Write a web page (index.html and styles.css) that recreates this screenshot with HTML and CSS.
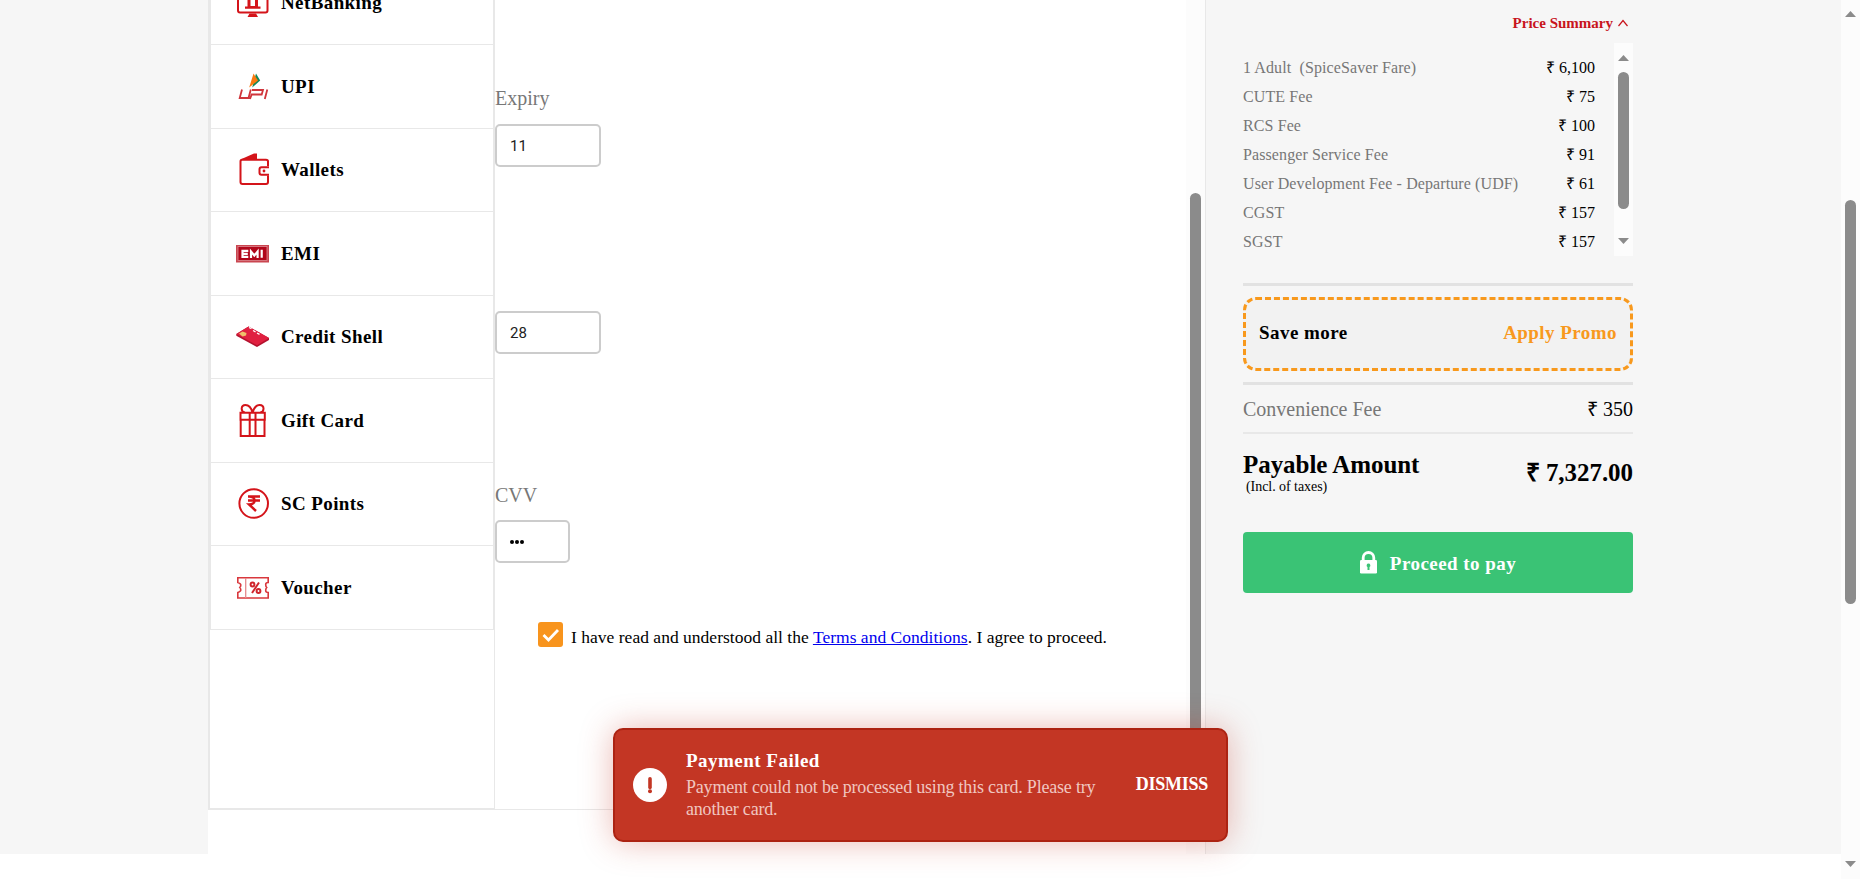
FILE: index.html
```html
<!DOCTYPE html>
<html lang="en">
<head>
<meta charset="utf-8">
<title>Payment</title>
<link rel="stylesheet" href="styles.css">
</head>
<body>
<div class="window">
  <div class="page">
    <main class="payment">
      <nav class="methods">
        <ul class="method-list">
          <li class="method">
            <svg class="icon" viewBox="0 0 33 33"><rect x="2" y="1" width="29.500" height="25.500" rx="2" fill="#fff" stroke="#d4141a" stroke-width="2"/><path d="M16.500 4l8 5h-16zM9 20.500h15.500v2.200H9zM11.500 11h3v9h4.500v-9h3v11H11.500zM13.500 27.500h6.500l2 3.500H11.500z" fill="#d4141a"/></svg>
            <span>NetBanking</span>
          </li>
          <li class="method">
            <svg class="icon" viewBox="0 0 33 33"><path d="M20 3.500l4.200 7-8 7z" fill="#12885a"/><path d="M17.500 3.500l4.500 7-8.800 7z" fill="#f97a10"/><path d="M6 19.500l-2.300 8.500h8.800L14.800 19.500M14 29l1.700-4.500h10l1.300-4.500H16M31.300 19.500l-2.500 9.500" fill="none" stroke="#d0353b" stroke-width="1.800"/></svg>
            <span>UPI</span>
          </li>
          <li class="method">
            <svg class="icon" viewBox="0 0 33 33"><path d="M5.500 6L18 .500h3V6z" fill="#d4141a"/><path d="M32 13V8.500Q32 6.700 30 6.700H6Q4.500 6.700 4.500 8.500V29q0 2 2 2H30q2 0 2-2V22.500" fill="none" stroke="#d4141a" stroke-width="2"/><path d="M33 14.200H25.500q-2 0-2 2v3.600q0 2 2 2H33" fill="none" stroke="#d4141a" stroke-width="2"/><circle cx="28" cy="18" r="1.400" fill="#d4141a"/></svg>
            <span>Wallets</span>
          </li>
          <li class="method">
            <svg class="icon" viewBox="0 0 33 33"><rect x="0" y="8" width="33" height="17.500" fill="#ca4650"/><rect x="2" y="9.500" width="29" height="14" fill="#b1061a" stroke="#dc8b92" stroke-width=".8"/><path d="M12.300 13.800H6.500v6H12.300M6.500 16.800h5.300M15 21v-6.500l3.300 4 3.300-4V21M25.700 12.800v8" fill="none" stroke="#fff" stroke-width="2.200"/></svg>
            <span>EMI</span>
          </li>
          <li class="method">
            <svg class="icon" viewBox="0 0 33 33"><path d="M.3 14L12.500 6.500 33 18v2L21 27 .3 15.800z" fill="#b3122e"/><path d="M.3 14L12.500 6.500 33 18l-12 7.200z" fill="#e02040"/><path d="M3 13.500l3.500-2 4 1.500-.5 2.500-3.500 1z" fill="#efc06b"/><path d="M13 7.500l2.500 1.200M17 10.500l2.500 1.300M21 13l2.500 1.300" stroke="#fff" stroke-width="1.300"/></svg>
            <span>Credit Shell</span>
          </li>
          <li class="method">
            <svg class="icon" viewBox="0 0 33 33"><path d="M4.500 8.800h24.300v7H4.500zM4.700 15.800h23.800v16.300H4.700zM13.700 8.800v23M19.500 8.800v23M16.500 8.500C15 3 13 1 9.500 1 4.500 1 4.500 8 9 8.500M16.700 8.500C18.200 3 20.200 1 23.700 1c5 0 5 7 .5 7.500" fill="none" stroke="#d4141a" stroke-width="2"/></svg>
            <span>Gift Card</span>
          </li>
          <li class="method">
            <svg class="icon" viewBox="0 0 33 33"><circle cx="17.700" cy="16.500" r="14.300" fill="none" stroke="#d4141a" stroke-width="2"/><path d="M12 9.500h12M12 13.500h12M13 9.500c7.500 0 7.500 8 0 8l7 6.500" fill="none" stroke="#d4141a" stroke-width="2.400"/></svg>
            <span>SC Points</span>
          </li>
          <li class="method">
            <svg class="icon" viewBox="0 0 33 33"><path d="M1.800 6.700H32.200V11.500q-2.500 0-2.500 2t1 3q-1 1-1 3t2.500 2v5.500H1.800V21.500q3-1 3-2.500t-1-2.500q1-1 1-2.500t-3-2.500z" fill="#fff" stroke="#d9383d" stroke-width="1.600"/><path d="M9.700 7v20" stroke="#e58a8d" stroke-width="1.300"/><g fill="none" stroke="#d0252c" stroke-width="2"><circle cx="16.500" cy="13.500" r="1.900"/><circle cx="22.500" cy="20" r="1.900"/><path d="M23 11.500l-7 10.500"/></g></svg>
            <span>Voucher</span>
          </li>
        </ul>
      </nav>
      <section class="form">
        <label class="label">Expiry</label>
        <div class="field month">11</div>
        <div class="field year">28</div>
        <label class="label cvv-label">CVV</label>
        <div class="field cvv"><i></i><i></i><i></i></div>
        <div class="terms">
          <span class="check"><svg viewBox="0 0 25 25"><path d="M5.500 13l5 5L20 8" fill="none" stroke="#fff" stroke-width="2.800"/></svg></span>
          <p class="terms-text">I have read and understood all the <a href="#">Terms and Conditions</a>. I agree to proceed.</p>
        </div>
      </section>
      <div class="form-track"><div class="form-thumb"></div></div>
    </main>
    <aside class="summary">
      <div class="summary-head">Price Summary <svg width="10" height="8" viewBox="0 0 10 8"><path d="M.5 7L5 1.500 9.500 7" fill="none" stroke="#c8141c" stroke-width="1.200"/></svg></div>
      <div class="fare-box">
        <ul class="fares">
          <li><span>1 Adult&nbsp; (SpiceSaver Fare)</span><b>₹ 6,100</b></li>
          <li><span>CUTE Fee</span><b>₹ 75</b></li>
          <li><span>RCS Fee</span><b>₹ 100</b></li>
          <li><span>Passenger Service Fee</span><b>₹ 91</b></li>
          <li><span>User Development Fee - Departure (UDF)</span><b>₹ 61</b></li>
          <li><span>CGST</span><b>₹ 157</b></li>
          <li><span>SGST</span><b>₹ 157</b></li>
        </ul>
        <div class="fare-track">
          <svg class="up" width="11" height="6" viewBox="0 0 11 6"><path d="M5.500 0L11 6H0z"/></svg>
          <div class="fare-thumb"></div>
          <svg class="down" width="11" height="6" viewBox="0 0 11 6"><path d="M0 0h11L5.500 6z"/></svg>
        </div>
      </div>
      <div class="promo-wrap">
        <div class="promo"><span>Save more</span><span class="apply">Apply Promo</span></div>
      </div>
      <div class="convenience"><span>Convenience Fee</span><b>₹ 350</b></div>
      <div class="payable">
        <div><div class="payable-title">Payable Amount</div><div class="payable-note">(Incl. of taxes)</div></div>
        <div class="payable-amount">₹ 7,327.00</div>
      </div>
      <div class="pay-button">
        <svg width="17" height="23" viewBox="0 0 17 23"><path d="M3.200 10V6.800a5.300 5.300 0 0 1 10.600 0V10" fill="none" stroke="#fff" stroke-width="2.800"/><rect y="9" width="17" height="13.500" rx="1.200" fill="#fff"/><path d="M8.500 12.500a1.900 1.900 0 0 1 1 3.500v3h-2v-3a1.900 1.900 0 0 1 1-3.500z" fill="#3ac375"/></svg>
        <span>Proceed to pay</span>
      </div>
    </aside>
  </div>
  <div class="page-track">
    <svg width="11" height="6" viewBox="0 0 11 6"><path d="M5.500 0L11 6H0z"/></svg>
    <div class="page-thumb"></div>
    <svg class="page-down" width="11" height="6" viewBox="0 0 11 6"><path d="M0 0h11L5.500 6z"/></svg>
  </div>
  <div class="toast">
    <svg class="toast-icon" width="34" height="34" viewBox="0 0 34 34"><circle cx="17" cy="17" r="17" fill="#fff"/><path d="M17 10.700v8.800" stroke="#c33624" stroke-width="3.600" stroke-linecap="round"/><circle cx="17" cy="23.300" r="2" fill="#c33624"/></svg>
    <div class="toast-body">
      <div class="toast-title">Payment Failed</div>
      <div class="toast-text">Payment could not be processed using this card. Please try another card.</div>
    </div>
    <div class="dismiss">DISMISS</div>
  </div>
</div>
</body>
</html>
```

FILE: styles.css
```css
* { box-sizing: border-box; }
body { margin: 0; font-family: "Liberation Serif", serif; color: #000; background: #fff; }
ul { list-style: none; margin: 0; padding: 0; }
p { margin: 0; }
b { font-weight: 400; }
svg { display: block; flex: none; }

.window { position: relative; width: 1860px; height: 879px; display: flex; overflow: hidden; }
.page { width: 1841px; height: 854px; padding-left: 208px; display: flex; background: #f6f6f6; }

/* payment methods */
.payment { width: 997px; display: flex; background: #fff; overflow: hidden; }
.methods { width: 287px; height: 810px; border: solid #e8e8e8; border-width: 0 1px 2px 2px; }
.method-list { margin-top: -38.500px; border: solid #e8e8e8; border-width: 0 1px; }
.method { height: 83.500px; padding-left: 25px; display: flex; align-items: center; gap: 12px; border-bottom: 1px solid #e8e8e8; font-size: 19px; font-weight: 700; line-height: 24px; letter-spacing: .4px; }
.method span { padding-top: 1px; }
.icon { width: 33px; height: 33px; }

/* card form */
.form { width: 691px; height: 810px; padding-top: 86px; border-bottom: 1px solid #e8e8e8; }
.label { display: block; height: 24px; font-size: 20px; line-height: 25px; color: #777; }
.field { width: 106px; height: 43px; margin-top: 14px; padding-left: 13px; border: 2px solid #ccc; border-radius: 5px; font: 15px/40px Roboto, sans-serif; color: #222; }
.year { margin-top: 144px; }
.cvv-label { margin-top: 129px; }
.cvv { width: 75px; margin-top: 13px; display: flex; align-items: center; gap: 1.200px; }
.cvv i { width: 4px; height: 4px; border-radius: 50%; background: #000; }
.terms { margin-top: 59px; padding-left: 43px; display: flex; gap: 8px; }
.check { width: 25px; height: 25px; border-radius: 3px; background: #f8941d; }
.terms-text { padding-top: 3px; font-size: 17.500px; line-height: 24px; letter-spacing: .02px; white-space: nowrap; }
.terms-text a { color: #00e; }
.form-track { width: 19px; height: 854px; padding: 193px 4px 0; background: #fcfcfc; }
.form-thumb { width: 11px; height: 600px; border-radius: 6px; background: #8b8b8b; }

/* price summary */
.summary { flex: 1; padding: 13px 0 0 37px; border-left: 1px solid #e8e8e8; }
.summary > * { width: 390px; }
.summary-head { padding-right: 5px; display: flex; justify-content: flex-end; align-items: center; gap: 5px; font-size: 15px; font-weight: 700; line-height: 20px; color: #c8141c; }
.fare-box { height: 213px; margin-top: 10px; display: flex; justify-content: space-between; }
.fares { width: 352px; padding-top: 10px; }
.fares li { display: flex; justify-content: space-between; font-size: 16px; line-height: 29px; }
.fares span { letter-spacing: .1px; color: #777; }
.fare-track { width: 19px; padding: 12px 4px 0; background: #fcfcfc; }
.fare-track svg, .page-track svg { fill: #8b8b8b; }
.fare-thumb { height: 137px; margin: 11px 0 29px; border-radius: 6px; background: #8b8b8b; }
.promo-wrap { margin-top: 27px; padding: 11px 0; border: solid #e2e2e2; border-width: 3px 0; }
.promo { height: 74px; padding: 0 13px 3px; display: flex; justify-content: space-between; align-items: center; border: 3px dashed #f8991d; border-radius: 13px; background: #f2f2f2; font-size: 19px; font-weight: 700; letter-spacing: .45px; }
.apply { color: #f8991d; }
.convenience { height: 49px; display: flex; justify-content: space-between; border-bottom: 2px solid #e8e8e8; font-size: 20px; line-height: 48px; }
.convenience span { color: #777; }
.payable { height: 98px; padding-top: 17px; display: flex; justify-content: space-between; }
.payable-title, .payable-amount { font-size: 25px; font-weight: 700; line-height: 28px; letter-spacing: -.05px; }
.payable-amount { padding-top: 8px; }
.payable-note { padding-left: 3px; font-size: 14px; line-height: 16px; letter-spacing: -.05px; }
.pay-button { height: 61px; display: flex; align-items: center; justify-content: center; gap: 13px; border-radius: 4px; background: #3ac375; color: #fff; font-size: 19px; font-weight: 700; letter-spacing: .45px; }
.pay-button span { padding-top: 2px; }

.page-track { width: 19px; height: 879px; padding: 11px 4px 0; background: #fcfcfc; }
.page-thumb { height: 404px; margin: 183px 0 257px; border-radius: 6px; background: #8b8b8b; }

/* error notification over the page */
.toast { position: absolute; left: 613px; top: 728px; width: 615px; height: 114px; padding: 0 18px; display: flex; align-items: center; border: 2px solid #ac2312; border-radius: 10px; background: #c33624; box-shadow: 0 0 32px rgba(195, 54, 36, .35); color: #fff; }
.toast-body { width: 430px; margin-left: 19px; padding-bottom: 2px; }
.toast-title { font-size: 19px; font-weight: 700; line-height: 24px; letter-spacing: .48px; }
.toast-text { margin-top: 3px; font-size: 18px; line-height: 22px; letter-spacing: -.2px; color: #f0c6c0; }
.dismiss { margin-left: auto; padding-bottom: 1px; font-size: 18px; font-weight: 700; letter-spacing: -.25px; }
```
